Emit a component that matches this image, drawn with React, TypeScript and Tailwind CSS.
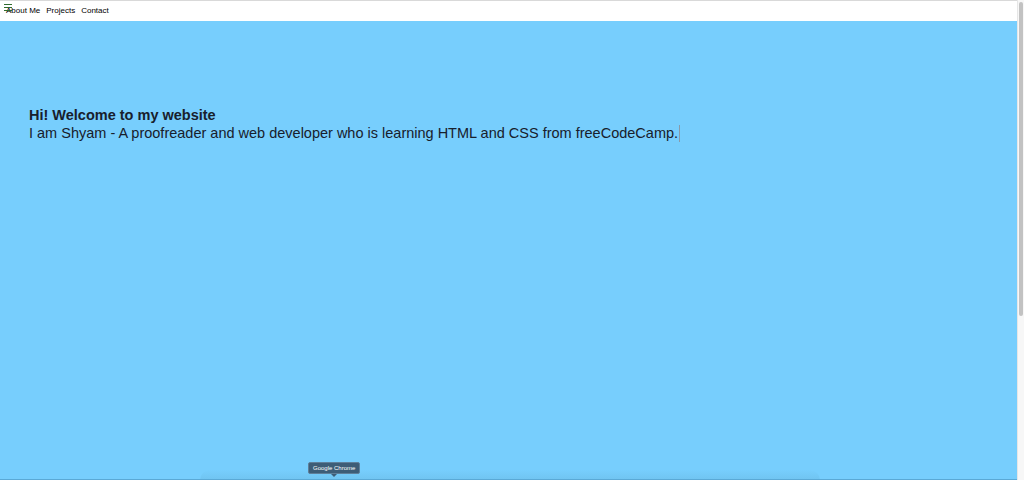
export default function App() {
  return (
    <div className="relative flex h-[480px] w-[1024px] overflow-hidden bg-white font-['Liberation_Sans',Arial,sans-serif] text-[#18202c]">
      <div className="flex min-w-0 flex-1 flex-col">
        {/* Nav bar */}
        <nav className="relative flex h-[21px] items-center gap-[6px] border-t border-[#d9d9d9] bg-white pl-[6px] text-[8px] font-medium text-black">
          <svg className="absolute left-[4px] top-[3px]" width="9" height="8" viewBox="0 0 9 8">
            <rect x="0" y="0" width="8" height="1" fill="#2f6b2f" />
            <rect x="0" y="3" width="8" height="1" fill="#2f6b2f" />
            <rect x="0" y="6" width="8" height="1" fill="#2f6b2f" />
          </svg>
          <a>About Me</a>
          <a>Projects</a>
          <a>Contact</a>
        </nav>

        {/* Welcome section */}
        <section className="relative flex-1 bg-[#77cefd] pl-[29px] pt-[85px]">
          <h1 className="text-[14.5px] font-bold leading-[18px]">Hi! Welcome to my website</h1>
          <p className="flex items-center text-[14.5px] leading-[18px]">
            I am Shyam - A proofreader and web developer who is learning HTML and CSS from freeCodeCamp.
            <span className="ml-[1px] inline-block h-[17px] w-px bg-[#8a9aa8]" />
          </p>
          <div className="absolute bottom-0 left-[200px] h-[10px] w-[620px] rounded-t-[20px] bg-gradient-to-b from-transparent to-[#6bbde8]/60" />
          <div className="absolute bottom-0 left-0 right-0 h-px bg-[#5aa9d6]" />
        </section>
      </div>

      {/* Scrollbar */}
      <div className="flex w-[7px] flex-col border-l border-[#e6e6e6] bg-[#f7f7f7] px-[1px] pt-[2px]">
        <div className="h-[314px] rounded-full bg-[#c2c2c2]" />
      </div>

      {/* Dock tooltip */}
      <div className="absolute left-[308px] top-[462px] flex flex-col items-center">
        <div className="rounded-[2px] border border-[#5f7f99] bg-[#3d5d77] px-[4px] py-[1px] text-[6px] leading-[8px] text-white">
          Google Chrome
        </div>
        <div className="h-0 w-0 border-x-[3px] border-t-[3px] border-x-transparent border-t-[#3d5d77]" />
      </div>
    </div>
  );
}
